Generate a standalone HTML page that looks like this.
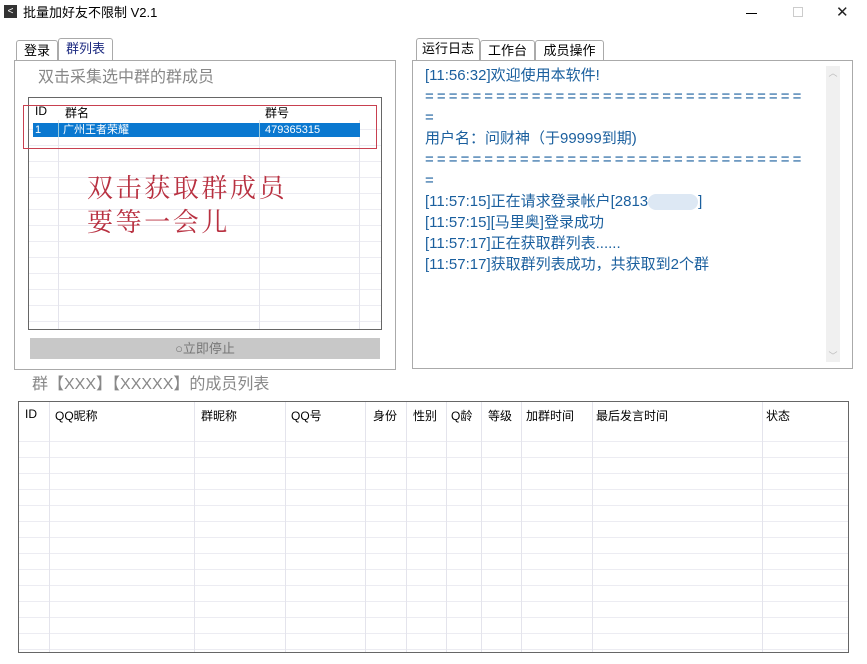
<!DOCTYPE html>
<html><head><meta charset="utf-8"><style>
*{margin:0;padding:0;box-sizing:border-box}
body{width:867px;height:664px;background:#fff;position:relative;overflow:hidden;font-family:"Liberation Sans","Noto Sans CJK SC",sans-serif;font-size:12px;color:#000}
.a{position:absolute}
.tab{position:absolute;border:1px solid #aaa;border-bottom:none;background:#fff;font-size:13px;text-align:center;line-height:20px;border-radius:3px 3px 0 0}
.log div{height:21px;line-height:21px;white-space:nowrap}
.eq{letter-spacing:3.1px}
.vl{position:absolute;top:0;bottom:0;width:1px;background:#e4e4ec}
</style></head><body>
<div class="a" style="left:4px;top:5px;width:13px;height:13px;background:#333;color:#fff;font-size:10px;line-height:13px;text-align:center">&lt;</div>
<div class="a" style="left:23px;top:4px;font-size:13px;line-height:17px">批量加好友不限制 V2.1</div>
<div class="a" style="left:746px;top:13px;width:11px;height:1px;background:#000"></div>
<div class="a" style="left:793px;top:7px;width:10px;height:10px;border:1px solid #ccc"></div>
<div class="a" style="left:836px;top:3px;font-size:15px;line-height:20px;color:#222">✕</div>

<!-- left panel -->
<div class="tab" style="left:16px;top:40px;width:42px;height:21px">登录</div>
<div class="tab" style="left:58px;top:38px;width:55px;height:23px;color:#1c2a80">群列表</div>
<div class="a" style="left:14px;top:60px;width:382px;height:310px;border:1px solid #aaa"></div>
<div class="a" style="left:38px;top:68px;font-size:16px;color:#888;line-height:20px">双击采集选中群的群成员</div>
<div class="a" style="left:28px;top:97px;width:354px;height:233px;border:1px solid #666;overflow:hidden;background:repeating-linear-gradient(#fff 0 15px,#ececf2 15px 16px)">
 <div class="vl" style="left:29px"></div><div class="vl" style="left:230px"></div><div class="vl" style="left:330px"></div>
 <div class="a" style="left:0;top:0;width:352px;height:22px;background:#fff"></div>
 <div class="a" style="left:6px;top:6px;font-size:12px">ID</div>
 <div class="a" style="left:36px;top:6px;font-size:12px">群名</div>
 <div class="a" style="left:236px;top:6px;font-size:12px">群号</div>
 <div class="a" style="left:4px;top:25px;width:327px;height:14px;background:#0a78d0;color:#fff;font-size:11px;line-height:14px">
  <span class="a" style="left:2px">1</span><span class="a" style="left:30px">广州王者荣耀</span><span class="a" style="left:232px">479365315</span>
  <div class="a" style="left:25px;top:0;width:1px;height:14px;background:#9cd"></div><div class="a" style="left:226px;top:0;width:1px;height:14px;background:#9cd"></div>
 </div>
</div>
<div class="a" style="left:23px;top:105px;width:354px;height:44px;border:1px solid #c84050"></div>
<div class="a" style="left:87px;top:170px;font-family:'Noto Serif CJK SC',serif;font-size:26px;line-height:34px;color:#b83040;letter-spacing:2.6px">双击获取群成员<br>要等一会儿</div>
<div class="a" style="left:30px;top:338px;width:350px;height:21px;background:#c8c8c8;color:#777;text-align:center;line-height:21px;font-size:13px">○立即停止</div>

<!-- right panel -->
<div class="tab" style="left:416px;top:38px;width:64px;height:23px">运行日志</div>
<div class="tab" style="left:480px;top:40px;width:55px;height:21px">工作台</div>
<div class="tab" style="left:535px;top:40px;width:69px;height:21px">成员操作</div>
<div class="a" style="left:412px;top:60px;width:441px;height:309px;border:1px solid #aaa"></div>
<div class="a" style="left:826px;top:66px;width:14px;height:296px;background:#f0f0f0;color:#bbb;font-size:9px;text-align:center">︿<div style="position:absolute;bottom:0;width:14px">﹀</div></div>
<div class="a log" style="left:425px;top:65px;font-size:15px;color:#1a5f9e">
<div>[11:56:32]欢迎使用本软件!</div>
<div class="eq">================================</div>
<div>=</div>
<div>用户名：问财神（于99999到期)</div>
<div class="eq">================================</div>
<div>=</div>
<div>[11:57:15]正在请求登录帐户[2813<span style="display:inline-block;width:50px;height:16px;background:#dde8f4;border-radius:8px;vertical-align:middle"></span>]</div>
<div>[11:57:15][马里奥]登录成功</div>
<div>[11:57:17]正在获取群列表......</div>
<div>[11:57:17]获取群列表成功，共获取到2个群</div>
</div>

<!-- bottom -->
<div class="a" style="left:32px;top:375px;font-size:16px;color:#888;line-height:20px">群【XXX】【XXXXX】的成员列表</div>
<div class="a" style="left:18px;top:401px;width:831px;height:252px;border:1px solid #666;overflow:hidden;background:repeating-linear-gradient(#fff 0 15px,#ececf2 15px 16px);background-position:0 8px">
 <div class="a" style="left:0;top:0;width:830px;height:24px;background:#fff"></div>
 <div class="vl" style="left:30px"></div><div class="vl" style="left:175px"></div><div class="vl" style="left:266px"></div><div class="vl" style="left:346px"></div><div class="vl" style="left:387px"></div><div class="vl" style="left:427px"></div><div class="vl" style="left:462px"></div><div class="vl" style="left:502px"></div><div class="vl" style="left:573px"></div><div class="vl" style="left:743px"></div><div class="vl" style="left:829px"></div>
 <div class="a" style="top:5px;left:6px">ID</div><div class="a" style="top:5px;left:36px">QQ昵称</div><div class="a" style="top:5px;left:182px">群昵称</div><div class="a" style="top:5px;left:272px">QQ号</div><div class="a" style="top:5px;left:354px">身份</div><div class="a" style="top:5px;left:394px">性别</div><div class="a" style="top:5px;left:432px">Q龄</div><div class="a" style="top:5px;left:469px">等级</div><div class="a" style="top:5px;left:507px">加群时间</div><div class="a" style="top:5px;left:577px">最后发言时间</div><div class="a" style="top:5px;left:747px">状态</div>
</div>
</body></html>
